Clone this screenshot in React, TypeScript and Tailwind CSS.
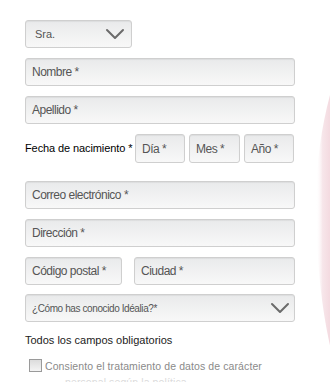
import React from "react";

const inputCls =
  "h-[28px] border border-[#cfcfcf] rounded-[3px] bg-gradient-to-b from-[#e9eaeb] to-[#f8f8f8] text-[12px] tracking-[-0.5px] text-[#555] flex items-center px-[6px] whitespace-nowrap shadow-[inset_0_1px_1px_rgba(0,0,0,0.06)]";

function Chevron() {
  return (
    <svg width="20" height="12" viewBox="0 0 20 12" fill="none">
      <path d="M2 2 L10 10 L18 2" stroke="#6b6b6b" strokeWidth="2" strokeLinecap="round" strokeLinejoin="round" />
    </svg>
  );
}

export default function App() {
  return (
    <div
      className="relative w-[330px] h-[382px] overflow-hidden bg-white"
      style={{ fontFamily: "'Liberation Sans', Arial, sans-serif" }}
    >
      <svg className="absolute left-[300px] top-0" width="60" height="382" viewBox="0 0 60 382">
        <defs>
          <linearGradient id="pk" x1="0" y1="0" x2="1" y2="0">
            <stop offset="0" stopColor="#ffffff" stopOpacity="0" />
            <stop offset="0.15" stopColor="#f7e6ea" />
            <stop offset="0.5" stopColor="#f0cdd5" />
            <stop offset="1" stopColor="#e6b0bd" />
          </linearGradient>
        </defs>
        <path d="M60 20 C 36 60, 16 130, 16 200 C 16 280, 26 340, 40 382 L60 382 Z" fill="url(#pk)" />
      </svg>

      <div className="relative flex flex-col pl-[25px] pt-[20px] w-[295px]">
        <div className={inputCls + " w-[107px] justify-between pl-[9px] pr-[6px] !text-[11px] !tracking-normal text-[#333]"}>
          <span>Sra.</span>
          <Chevron />
        </div>
        <div className={inputCls + " mt-[10px] w-[270px]"}>Nombre *</div>
        <div className={inputCls + " mt-[10px] w-[270px]"}>Apellido *</div>
        <div className="mt-[10px] flex items-center h-[29px]">
          <span className="text-[11px] text-black w-[110px] tracking-[-0.1px]">Fecha de nacimiento *</span>
          <div className={inputCls + " !h-[29px] w-[50px]"}>Día *</div>
          <div className={inputCls + " !h-[29px] w-[51px] ml-[4px]"}>Mes *</div>
          <div className={inputCls + " !h-[29px] w-[50px] ml-[4px]"}>Año *</div>
        </div>
        <div className={inputCls + " mt-[18px] w-[270px]"}>Correo electrónico *</div>
        <div className={inputCls + " mt-[10px] w-[270px]"}>Dirección *</div>
        <div className="mt-[10px] flex">
          <div className={inputCls + " w-[97px]"}>Código postal *</div>
          <div className={inputCls + " w-[161px] ml-[12px]"}>Ciudad *</div>
        </div>
        <div className={inputCls + " mt-[9px] w-[270px] justify-between !text-[10px] !tracking-[-0.4px] text-[#333] pr-[4px]"}>
          <span>¿Cómo has conocido Idéalia?*</span>
          <Chevron />
        </div>
        <div className="mt-[11px] text-[11px] text-[#222] leading-[14px]">Todos los campos obligatorios</div>
        <div className="mt-[11px] flex items-start">
          <div className="w-[13px] h-[13px] ml-[4px] mt-[1px] border border-[#9a9a9a] bg-gradient-to-b from-[#dcdcdc] to-[#f4f4f4] shrink-0" />
          <div className="ml-[3px] text-[10.5px] text-[#8a8a8a] leading-[16px] tracking-[0.1px]">
            <div className="whitespace-nowrap">Consiento el tratamiento de datos de carácter</div>
            <div className="whitespace-nowrap opacity-30 pl-[20px]">personal según la política</div>
          </div>
        </div>
      </div>
    </div>
  );
}
